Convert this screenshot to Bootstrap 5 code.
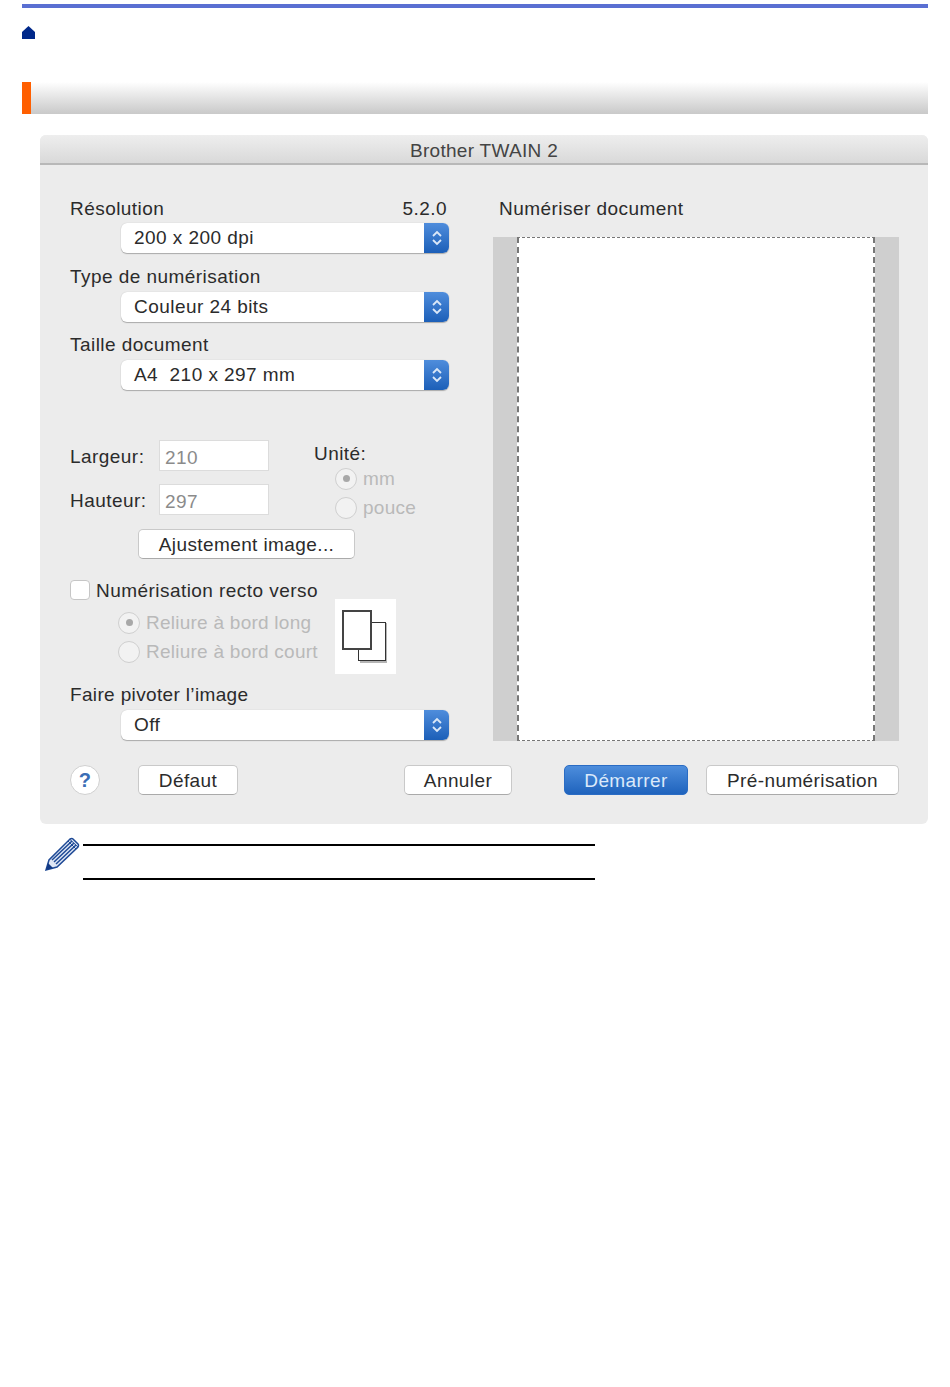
<!DOCTYPE html>
<html lang="fr">
<head>
  <meta charset="UTF-8" />
  <title>Brother TWAIN 2</title>
  <link href="https://cdn.jsdelivr.net/npm/bootstrap@5.3.0/dist/css/bootstrap.min.css" rel="stylesheet"/>
  <style>
    body {
      background: #fff;
      color: #2b2b2b;
      font-family: "Liberation Sans", Arial, sans-serif;
      font-size: 19px;
      letter-spacing: .45px;
      line-height: 1;
      padding: 4px 22px 0;
    }
    .top-rule { height: 4px; background: #5a6fd2; }
    .home-link { height: 74px; padding-top: 18px; }
    .section-bar {
      height: 32px;
      background: linear-gradient(to bottom, #fff, #f1f1f1 25%, #c9c9c9);
    }
    .section-mark { width: 9px; background: #ff5f00; }
    .dialog {
      margin: 21px 0 0 18px;
      height: 689px;
      background: #ececec;
      border-radius: 6px;
    }
    .dialog-title {
      height: 30px;
      padding-top: 2px;
      background: linear-gradient(to bottom, #eee, #d9d9d9);
      border-bottom: 2px solid #b8b8b8;
      border-radius: 6px 6px 0 0;
      color: #444;
      letter-spacing: .3px;
    }
    .dialog-body { padding: 0 29px 0 30px; }
    .left-col { width: 379px; }
    .right-col { width: 406px; margin-left: 44px; }
    .field-label { height: 38.5px; padding-bottom: 6px; }
    .field-label.first { height: 58px; padding-bottom: 5px; }
    .field-label.pivot { height: 33px; margin-top: 4px; letter-spacing: .35px; }
    .version-text { margin-right: 2px; }
    .popup {
      height: 30px;
      width: 328px;
      margin-left: 51px;
      background: #fff;
      border-radius: 6px;
      box-shadow: 0 1px 1px #aaa, 0 0 1px #bbb;
      overflow: hidden;
      padding-left: 13px;
    }
    .popup-text { padding-bottom: 1px; }
    .popup-arrows {
      width: 25px;
      height: 100%;
      background: linear-gradient(to bottom, #4f8ddc, #1c5fb8);
    }
    .size-block { height: 89px; margin-top: 50px; }
    .size-row { height: 44px; }
    .size-name { width: 89px; padding-top: 7px; }
    .size-field {
      width: 110px;
      height: 31px;
      padding: 7px 5px;
      border: 1px solid #dcdcdc;
      background: #fff;
      color: #8b8b8b;
    }
    .unit-col { margin-left: 45px; }
    .unit-name { height: 20px; margin-top: 4px; }
    .unit-opt { height: 29px; margin-left: 21px; }
    .dim-text { color: #b9b9b9; letter-spacing: .25px; }
    .radio-dot {
      width: 22px;
      height: 22px;
      border-radius: 50%;
      background: #f2f2f2;
      border: 1px solid #cfcfcf;
      margin-right: 6px;
      flex: none;
    }
    .radio-dot.on::after {
      content: "";
      width: 7px;
      height: 7px;
      border-radius: 50%;
      background: #a8a8a8;
    }
    .mac-btn {
      height: 30px;
      padding: 0;
      background: #fff;
      border: 1px solid #c9c9c9;
      border-bottom-color: #aaa;
      border-radius: 5px;
      color: #2b2b2b;
      font-size: 19px;
      letter-spacing: .4px;
      line-height: 1;
    }
    .mac-btn.default-btn {
      background: linear-gradient(to bottom, #4d8ddc, #1f63bd);
      border-color: #2a6cc4;
      color: #dbe9fa;
    }
    .adjust-btn { width: 217px; margin-left: 68px; display: block; }
    .duplex-block { height: 94px; margin-top: 20px; }
    .duplex-left { width: 265px; }
    .check-box {
      width: 20px;
      height: 20px;
      background: #fff;
      border: 1px solid #c6c6c6;
      border-radius: 4px;
      margin-right: 6px;
    }
    .duplex-check { height: 20px; margin-top: 1px; }
    .duplex-opts { margin: 8px 0 0 48px; }
    .duplex-opt { height: 29px; }
    .duplex-pic {
      width: 61px;
      height: 75px;
      margin-top: 20px;
      background: #fff;
    }
    .scan-spacer { height: 28px; }
    .scan-title { height: 44px; padding: 6px 0 0 6px; }
    .scan-area {
      height: 504px;
      background: #cfcfcf;
      padding: 0 24px;
    }
    .scan-page {
      height: 100%;
      background: #fff;
      border-style: dashed;
      border-color: #777;
      border-width: 1px 2px;
    }
    .dialog-foot { margin-top: 24px; height: 30px; }
    .help-btn {
      width: 30px;
      height: 30px;
      border-radius: 50%;
      background: #fff;
      border: 1px solid #d0d0d0;
      color: #3a6db5;
      font-weight: 700;
      font-size: 20px;
    }
    .btn-defaut { width: 100px; margin-left: 38px; }
    .btn-annuler { width: 108px; margin-left: 166px; }
    .btn-demarrer { width: 124px; margin-left: 52px; }
    .btn-prescan { width: 193px; margin-left: 18px; }
    .note-row { margin-left: 23px; padding-top: 13px; }
    .note-icon { width: 38px; height: 36px; }
    .note-lines {
      width: 512px;
      height: 36px;
      border-top: 2px solid #000;
      border-bottom: 2px solid #000;
      margin-top: 7px;
    }
  </style>
</head>
<body>
  <div class="top-rule"></div>
  <div class="home-link">
    <svg width="13" height="13" viewBox="0 0 13 13" class="d-block"><path d="M6.5 0 13 6V13H0V6Z" fill="#00288a"/></svg>
  </div>
  <div class="section-bar d-flex"><div class="section-mark"></div></div>

  <div class="dialog">
    <div class="dialog-title d-flex align-items-center justify-content-center">Brother TWAIN 2</div>
    <div class="dialog-body">
      <div class="d-flex">
        <div class="left-col">
          <div class="field-label first d-flex justify-content-between align-items-end"><span>Résolution</span><span class="version-text">5.2.0</span></div>
          <div class="popup d-flex align-items-center justify-content-between"><span class="popup-text">200 x 200 dpi</span>
            <span class="popup-arrows d-flex align-items-center justify-content-center"><svg width="12" height="18" viewBox="0 0 12 18"><path d="M2 7 6 3l4 4M2 11 6 15l4-4" fill="none" stroke="#dbe8f8" stroke-width="1.800"/></svg></span></div>
          <div class="field-label d-flex align-items-end">Type de numérisation</div>
          <div class="popup d-flex align-items-center justify-content-between"><span class="popup-text">Couleur 24 bits</span>
            <span class="popup-arrows d-flex align-items-center justify-content-center"><svg width="12" height="18" viewBox="0 0 12 18"><path d="M2 7 6 3l4 4M2 11 6 15l4-4" fill="none" stroke="#dbe8f8" stroke-width="1.800"/></svg></span></div>
          <div class="field-label d-flex align-items-end">Taille document</div>
          <div class="popup d-flex align-items-center justify-content-between"><span class="popup-text">A4&nbsp; 210 x 297 mm</span>
            <span class="popup-arrows d-flex align-items-center justify-content-center"><svg width="12" height="18" viewBox="0 0 12 18"><path d="M2 7 6 3l4 4M2 11 6 15l4-4" fill="none" stroke="#dbe8f8" stroke-width="1.800"/></svg></span></div>

          <div class="size-block d-flex">
            <div>
              <div class="size-row d-flex align-items-start"><span class="size-name">Largeur:</span><div class="size-field">210</div></div>
              <div class="size-row d-flex align-items-start"><span class="size-name">Hauteur:</span><div class="size-field">297</div></div>
            </div>
            <div class="unit-col">
              <div class="unit-name">Unité:</div>
              <div class="unit-opt d-flex align-items-center"><span class="radio-dot on d-flex align-items-center justify-content-center"></span><span class="dim-text">mm</span></div>
              <div class="unit-opt d-flex align-items-center"><span class="radio-dot"></span><span class="dim-text">pouce</span></div>
            </div>
          </div>

          <button type="button" class="btn mac-btn adjust-btn">Ajustement image...</button>

          <div class="duplex-block d-flex">
            <div class="duplex-left">
              <div class="duplex-check d-flex align-items-center"><span class="check-box"></span><span>Numérisation recto verso</span></div>
              <div class="duplex-opts">
                <div class="duplex-opt d-flex align-items-center"><span class="radio-dot on d-flex align-items-center justify-content-center"></span><span class="dim-text">Reliure à bord long</span></div>
                <div class="duplex-opt d-flex align-items-center"><span class="radio-dot"></span><span class="dim-text">Reliure à bord court</span></div>
              </div>
            </div>
            <div class="duplex-pic">
              <svg width="61" height="75" viewBox="0 0 61 75" class="d-block">
                <path d="M51 24V63H25" fill="none" stroke="#b5b5b5" stroke-width="2"/>
                <rect x="23.500" y="23.500" width="27" height="38" fill="#fff" stroke="#333" stroke-width="1"/>
                <rect x="8" y="12" width="28" height="38" fill="#fff" stroke="#444" stroke-width="2"/>
              </svg>
            </div>
          </div>

          <div class="field-label pivot d-flex align-items-end">Faire pivoter l’image</div>
          <div class="popup d-flex align-items-center justify-content-between"><span class="popup-text">Off</span>
            <span class="popup-arrows d-flex align-items-center justify-content-center"><svg width="12" height="18" viewBox="0 0 12 18"><path d="M2 7 6 3l4 4M2 11 6 15l4-4" fill="none" stroke="#dbe8f8" stroke-width="1.800"/></svg></span></div>
        </div>

        <div class="right-col">
          <div class="scan-spacer"></div>
          <div class="scan-title">Numériser document</div>
          <div class="scan-area"><div class="scan-page"></div></div>
        </div>
      </div>

      <div class="dialog-foot d-flex align-items-center">
        <span class="help-btn d-flex align-items-center justify-content-center">?</span>
        <button type="button" class="btn mac-btn btn-defaut">Défaut</button>
        <button type="button" class="btn mac-btn btn-annuler">Annuler</button>
        <button type="button" class="btn mac-btn default-btn btn-demarrer">Démarrer</button>
        <button type="button" class="btn mac-btn btn-prescan">Pré-numérisation</button>
      </div>
    </div>
  </div>

  <div class="note-row d-flex">
    <svg class="note-icon" viewBox="0 0 38 36">
      <path d="M1 33 4 23 25 2q2-1 3 0l5 5q1 1 0 3L12 30Z" fill="#dfe7f5" stroke="#1f4a96" stroke-width="1.500"/>
      <path d="M7 23 27 4M9 25 29 6M11 27 31 8" stroke="#1f4a96" stroke-width="1.500"/>
      <path d="M23 4 31 12M25 2.500 33 10" stroke="#1f4a96" stroke-width="1"/>
      <path d="M1 33 3 26 8 31Z" fill="#123a85"/>
    </svg>
    <div class="note-lines"></div>
  </div>
</body>
</html>
